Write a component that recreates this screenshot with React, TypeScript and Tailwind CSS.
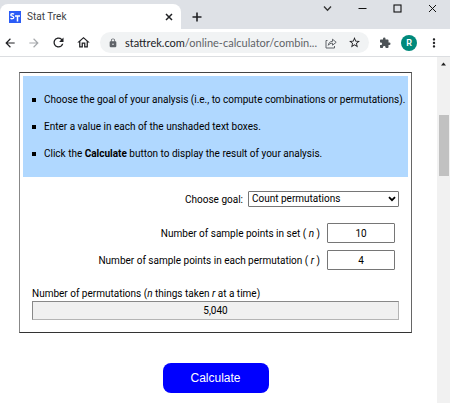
import React, { useState } from 'react';
import {
  MdArrowBack,
  MdArrowForward,
  MdExtension,
  MdLock,
  MdMoreVert,
  MdOutlineHome,
  MdRefresh,
  MdStarBorder,
} from 'react-icons/md';

function TabBar() {
  return (
    <div className="flex h-[29px] items-stretch bg-[#dee1e6] pt-1">
      <div className="flex w-[181px] items-center rounded-t-lg bg-white pr-2 pl-[9px]">
        <svg className="h-3 w-3" viewBox="0 0 12 12">
          <rect width="12" height="12" fill="#2b5cf6" />
          <path d="M5 3.2C4.300 2.500 1.800 2.400 1.800 4C1.800 5.500 4.800 4.800 4.800 6.500C4.800 8 2.300 8 1.500 7.200" fill="none" stroke="#fff" strokeWidth="1.300" />
          <path d="M6 5h5M8.500 5v5.500" fill="none" stroke="#fff" strokeWidth="1.500" />
        </svg>
        <span className="ml-[6px] flex-1 text-[#3c4043]">Stat Trek</span>
        <button aria-label="Close tab">
          <svg className="h-2 w-2" viewBox="0 0 8 8">
            <path d="M1 1l6 6M7 1l-6 6" stroke="#202124" strokeWidth="1.500" />
          </svg>
        </button>
      </div>
      <button aria-label="New tab" className="-mt-1 ml-[11px]">
        <svg className="mt-1 h-[10px] w-[10px]" viewBox="0 0 10 10">
          <path d="M5 .5v9M.5 5h9" stroke="#202124" strokeWidth="1.600" />
        </svg>
      </button>
      <div className="-mt-1 ml-auto flex h-4 items-center gap-[26px] pr-[13px]">
        <button aria-label="Search tabs">
          <svg className="h-[9px] w-[9px]" viewBox="0 0 9 9">
            <path d="M1 2.500l3.500 3.800L8 2.500" fill="none" stroke="#333" strokeWidth="1.300" />
          </svg>
        </button>
        <button aria-label="Minimize">
          <svg className="h-[9px] w-[9px]" viewBox="0 0 9 9">
            <path d="M.5 4.500h8" stroke="#111" strokeWidth="1" />
          </svg>
        </button>
        <button aria-label="Maximize">
          <svg className="h-[9px] w-[9px]" viewBox="0 0 9 9">
            <rect x="1" y="1" width="7" height="7" fill="none" stroke="#111" strokeWidth="1.100" />
          </svg>
        </button>
        <button aria-label="Close">
          <svg className="h-[9px] w-[9px]" viewBox="0 0 9 9">
            <path d="M1 1l7 7M8 1l-7 7" stroke="#111" strokeWidth="1" />
          </svg>
        </button>
      </div>
    </div>
  );
}

function Toolbar() {
  return (
    <div className="flex h-7 items-center border-b border-[#dcdee1] bg-white pr-[9px] pl-[3px] text-[#202124]">
      <div className="flex items-center gap-[10px]">
        <button aria-label="Back"><MdArrowBack size={14} /></button>
        <button aria-label="Forward" className="text-[#a5a8ab]"><MdArrowForward size={14} /></button>
        <button aria-label="Reload"><MdRefresh size={15} /></button>
        <button aria-label="Home"><MdOutlineHome size={15} /></button>
      </div>
      <div className="ml-[9px] flex h-[21px] min-w-0 flex-1 items-center rounded-full bg-[#f1f3f4] pr-2 pl-2">
        <MdLock size={10} className="shrink-0 text-[#5f6368]" />
        <a href="#" className="ml-[7px] flex-1 font-['Lato',sans-serif] text-[11px] whitespace-nowrap text-[#5f6368]">
          <span className="text-[#202124]">stattrek.com</span>/online-calculator/combin...
        </a>
        <button aria-label="Share" className="mr-[11px] shrink-0">
          <svg className="h-3 w-3" viewBox="0 0 12 12" fill="none" stroke="#5f6368">
            <path d="M2.500 3.500h-1.500v7.500h8.500v-2" />
            <path d="M3.300 8.300C3.600 5.700 5 4.500 7.500 4.400V2.200L11.200 5.300L7.500 8.200V6.200C5.500 6.200 4.300 6.900 3.300 8.300Z" />
          </svg>
        </button>
        <button aria-label="Bookmark" className="shrink-0"><MdStarBorder size={13} /></button>
      </div>
      <button aria-label="Extensions" className="ml-[10px] text-[#4d5357]"><MdExtension size={12} /></button>
      <button className="ml-[10px] h-4 w-4 rounded-full bg-[#00897b] text-center text-[9px] leading-4 font-semibold text-white">R</button>
      <button aria-label="Menu" className="ml-[10px]"><MdMoreVert size={14} /></button>
    </div>
  );
}

function Scrollbar() {
  return (
    <div className="flex w-[13px] shrink-0 flex-col items-center bg-[#f1f1f1] pt-[5px]">
      <svg className="h-1 w-[5px]" viewBox="0 0 5 4">
        <path d="M0 3.500L2.500 .5L5 3.500Z" fill="#222" />
      </svg>
      <div className="mt-[49px] h-[61px] w-[10px] bg-[#c1c1c1]" />
    </div>
  );
}

function Calculator() {
  const [goal, setGoal] = useState("permutations");
  const [n, setN] = useState("10");
  const [r, setR] = useState("4");
  const [result, setResult] = useState("5,040");

  const calculate = () => {
    const total = parseInt(n);
    const taken = parseInt(r);
    let value = 1;
    for (let i = 0; i < taken; i++) {
      value = value * (total - i);
      if (goal === "combinations") {
        value = value / (i + 1);
      }
    }
    setResult(isNaN(total) || isNaN(taken) ? "" : Math.round(value).toLocaleString("en-US"));
  };

  return (
    <div className="min-w-0 flex-1 pt-[15px] pr-[25px] pb-[10px] pl-[19px]">
      <div className="border border-t-[#444] border-r-[#666] border-b-[#333] border-l-[#888] px-[3px] pt-[3px] pb-3">
        {/* instructions */}
        <ul className="flex list-none flex-col gap-3 bg-[#b0d8ff] py-4 pl-[9px] whitespace-nowrap">
          <li className="flex items-center gap-2">
            <span className="h-1 w-1 shrink-0 bg-black" />
            <span>Choose the goal of your analysis (i.e., to compute combinations or permutations).</span>
          </li>
          <li className="flex items-center gap-2">
            <span className="h-1 w-1 shrink-0 bg-black" />
            <span>Enter a value in each of the unshaded text boxes.</span>
          </li>
          <li className="flex items-center gap-2">
            <span className="h-1 w-1 shrink-0 bg-black" />
            <span>Click the <b>Calculate</b> button to display the result of your analysis.</span>
          </li>
        </ul>
        {/* form */}
        <div className="flex flex-col px-[9px] pt-[14px]">
          <div className="flex items-center justify-end gap-[5px]">
            <label htmlFor="goal">Choose goal:</label>
            <div className="relative">
              <select
                id="goal"
                className="block h-4 w-[151px] appearance-none rounded-[1px] border border-[#767676] bg-white pl-[3px] leading-[14px]"
                value={goal}
                onChange={(e) => setGoal(e.target.value)}
              >
                <option value="permutations">Count permutations</option>
                <option value="combinations">Count combinations</option>
              </select>
              <svg className="pointer-events-none absolute top-[5px] right-[3px] h-[6px] w-2" viewBox="0 0 8 6">
                <path d="M1 1.200l3 3l3-3" fill="none" stroke="#000" strokeWidth="1.800" />
              </svg>
            </div>
          </div>
          <div className="mt-4 flex items-center justify-end gap-[7px] pr-1">
            <label htmlFor="n">Number of sample points in set ( <i>n</i> )</label>
            <input
              id="n"
              type="text"
              className="h-5 w-[68px] rounded-[1px] border border-[#767676] text-center"
              value={n}
              onChange={(e) => setN(e.target.value)}
            />
          </div>
          <div className="mt-[7px] flex items-center justify-end gap-[7px] pr-1">
            <label htmlFor="r">Number of sample points in each permutation ( <i>r</i> )</label>
            <input
              id="r"
              type="text"
              className="h-5 w-[68px] rounded-[1px] border border-[#767676] text-center"
              value={r}
              onChange={(e) => setR(e.target.value)}
            />
          </div>
          <label htmlFor="result" className="mt-4">
            Number of permutations (<i>n</i> things taken <i>r</i> at a time)
          </label>
          <input
            id="result"
            type="text"
            readOnly
            className="h-[19px] w-full border border-t-[#888] border-r-[#b4b4b4] border-b-[#b4b4b4] border-l-[#888] bg-[#f0f0f0] text-center"
            value={result}
          />
        </div>
      </div>
      <div className="mt-[30px] flex justify-center">
        <button
          onClick={calculate}
          className="h-[30px] w-[106px] rounded-lg bg-[#0000ff] font-['Liberation_Sans',sans-serif] text-xs text-white"
        >
          Calculate
        </button>
      </div>
    </div>
  );
}

function App() {
  return (
    <div className="flex min-h-screen flex-col bg-white font-['Roboto',sans-serif] text-[10px] leading-[15px] text-black">
      <TabBar />
      <Toolbar />
      <div className="flex flex-1">
        <Calculator />
        <Scrollbar />
      </div>
    </div>
  );
}

export default App;
